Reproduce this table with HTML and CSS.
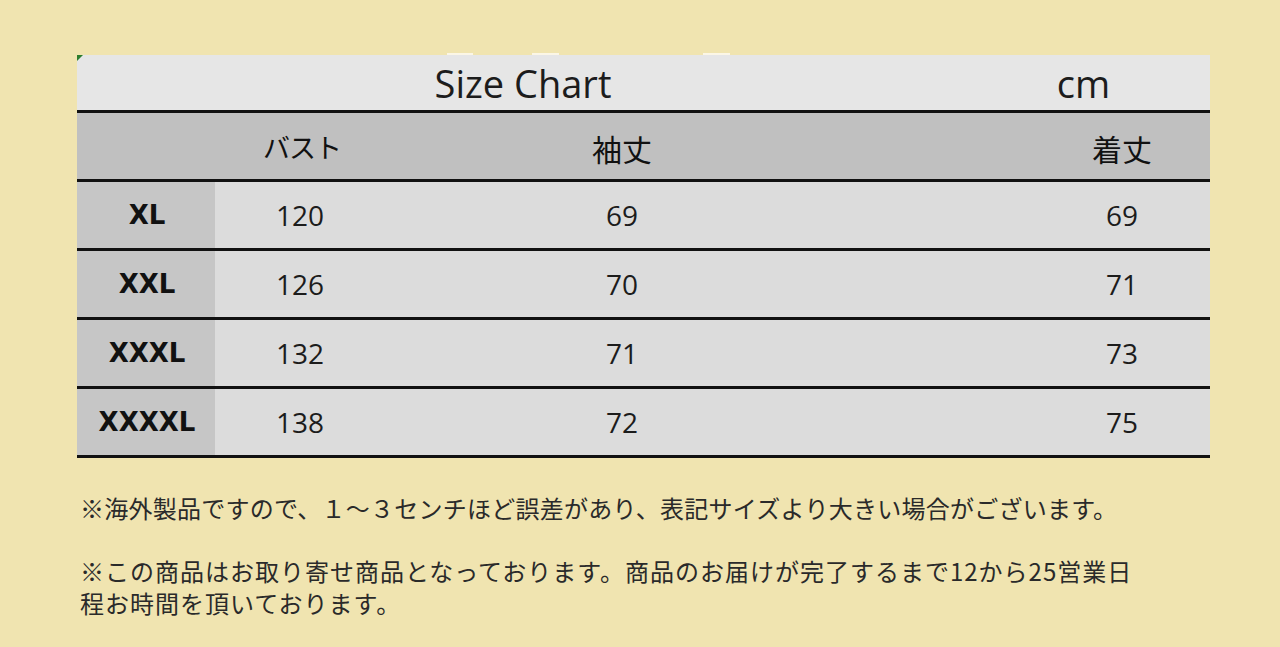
FILE: index.html
```html
<!DOCTYPE html>
<html lang="ja">
<head>
<meta charset="utf-8">
<title>Size Chart</title>
<link rel="stylesheet" href="styles.css">
</head>
<body>
<div class="page">
  <div class="topmarks"></div>
  <div class="chart">
    <div class="title-row">
      <div class="title">Size Chart</div>
      <div class="unit">cm</div>
    </div>
    <div class="row head">
      <div class="cell"></div>
      <div class="cell jp kana">バスト</div>
      <div class="cell jp">袖丈</div>
      <div class="cell"></div>
      <div class="cell jp">着丈</div>
    </div>
    <div class="row data">
      <div class="cell size">XL</div>
      <div class="cell">120</div>
      <div class="cell">69</div>
      <div class="cell"></div>
      <div class="cell">69</div>
    </div>
    <div class="row data">
      <div class="cell size">XXL</div>
      <div class="cell">126</div>
      <div class="cell">70</div>
      <div class="cell"></div>
      <div class="cell">71</div>
    </div>
    <div class="row data">
      <div class="cell size">XXXL</div>
      <div class="cell">132</div>
      <div class="cell">71</div>
      <div class="cell"></div>
      <div class="cell">73</div>
    </div>
    <div class="row data">
      <div class="cell size">XXXXL</div>
      <div class="cell">138</div>
      <div class="cell">72</div>
      <div class="cell"></div>
      <div class="cell">75</div>
    </div>
  </div>
  <div class="notes">
    <p class="note note-one">※海外製品ですので、１～３センチほど誤差があり、表記サイズより大きい場合がございます。</p>
    <p class="note note-two">※この商品はお取り寄せ商品となっております。商品のお届けが完了するまで12から25営業日程お時間を頂いております。</p>
  </div>
</div>
</body>
</html>
```

FILE: styles.css
```css
html, body {
  margin: 0;
  padding: 0;
  background: #f0e4b0;
}

.page {
  padding: 53px 0 0 77px;
  width: 1133px;
}

.topmarks {
  height: 2px;
  background: linear-gradient(to right,
    transparent 370px, #fbf6e6 370px, #fbf6e6 396px, transparent 396px,
    transparent 455px, #fbf6e6 455px, #fbf6e6 482px, transparent 482px,
    transparent 626px, #fbf6e6 626px, #fbf6e6 653px, transparent 653px);
}

.chart {
  position: relative;
  width: 1133px;
  font-family: "Open Sans", "Liberation Sans", sans-serif;
  color: #1c1c1c;
}

.chart::before {
  content: "";
  position: absolute;
  left: 0;
  top: 0;
  width: 0;
  height: 0;
  border-top: 6px solid #2d7d2d;
  border-right: 6px solid transparent;
}

.title-row {
  display: grid;
  grid-template-columns: 892px 1fr;
  height: 55px;
  background: #e6e6e6;
  border-bottom: 3px solid #111;
  align-items: center;
  font-size: 38px;
  line-height: 1;
}

.title {
  text-align: center;
}

.unit {
  text-align: center;
  padding-right: 12px;
}

.row {
  display: grid;
  grid-template-columns: 138px 170px 474px 175px 176px;
  height: 66px;
  border-bottom: 3px solid #111;
}

.cell {
  display: flex;
  align-items: center;
  justify-content: center;
}

.head {
  background: #c0c0c0;
}

.head .jp {
  font-family: "Noto Sans CJK JP", sans-serif;
  font-size: 30px;
  color: #111;
  padding-top: 3px;
}

.head .kana {
  font-size: 27px;
  letter-spacing: -1px;
  padding-left: 4px;
  padding-top: 0;
}

.data {
  background: #dcdcdc;
  font-size: 28px;
}

.data .size {
  background: #c6c6c6;
  font-family: "DejaVu Sans", sans-serif;
  font-weight: bold;
  font-size: 26px;
  color: #111;
  padding-left: 2px;
}

.notes {
  margin-top: 34px;
  padding-left: 3px;
  width: 1062px;
  font-family: "Noto Sans CJK JP", sans-serif;
  font-size: 24px;
  line-height: 32px;
  color: #2a2a2a;
}

.note {
  margin: 0;
}

.note-one {
  letter-spacing: 0.25px;
}

.note-two {
  margin-top: 31px;
  letter-spacing: 1px;
}
```
